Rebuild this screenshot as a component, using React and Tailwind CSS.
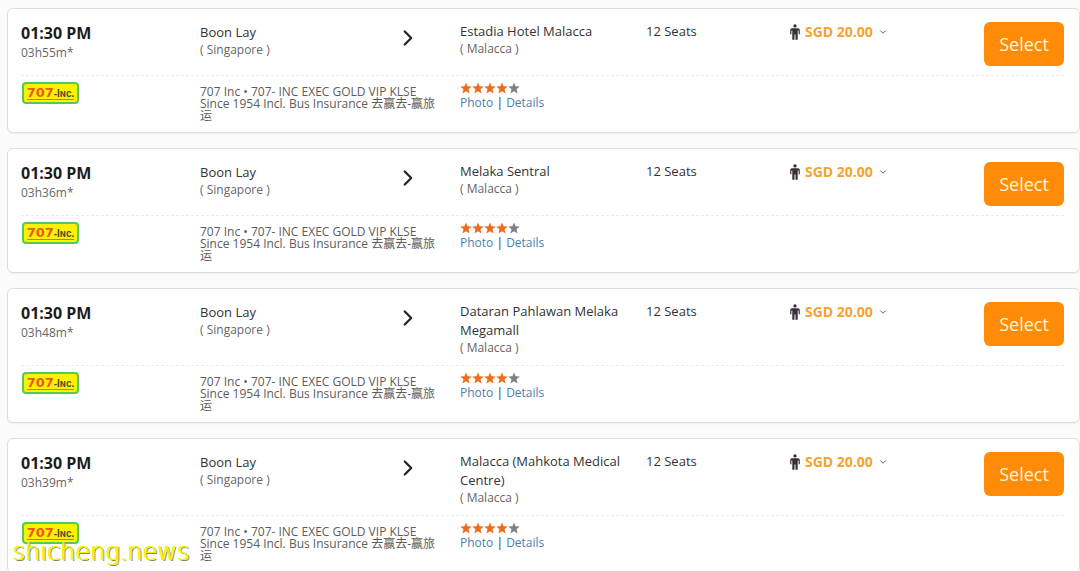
import React from 'react';
import { ChevronDown, ChevronRight } from 'lucide-react';

const trips = [
  { id: 1, time: "01:30 PM", duration: "03h55m*", to: "Estadia Hotel Malacca" },
  { id: 2, time: "01:30 PM", duration: "03h36m*", to: "Melaka Sentral" },
  { id: 3, time: "01:30 PM", duration: "03h48m*", to: "Dataran Pahlawan Melaka Megamall" },
  { id: 4, time: "01:30 PM", duration: "03h39m*", to: "Malacca (Mahkota Medical Centre)" }
];

const Person = () => (
  <svg viewBox="0 0 10 16" className="w-[10px] h-4 shrink-0" fill="#3a2d3a" aria-hidden="true">
    <circle cx="5" cy="1.9" r="1.7" />
    <path d="M2 4.2h6Q9.8 4.2 9.8 6v4.3H8.6V6.6H7.7V15.8H5.5V10.6H4.5V15.8H2.3V6.6H1.4v3.7H.2V6Q.2 4.2 2 4.2z" />
  </svg>
);

const OperatorLogo = () => (
  <div className="ml-px w-[57px] h-[22px] rounded border-2 border-[#52c95a] bg-[#fbf200] flex items-center justify-center">
    <div className="flex items-baseline border-b border-[#e0701c] h-[14px] leading-[13px] font-['DejaVu_Sans'] font-bold">
      <span className="text-[13px] text-[#ea5a0c]">707</span>
      <span className="text-[10px] font-['Liberation_Sans'] text-[#4f4a20]">-Iɴc.</span>
    </div>
  </div>
);

const Stars = ({ rating }) => (
  <div className="flex h-3" role="img" aria-label={`${rating} of 5`}>
    {[1, 2, 3, 4, 5].map(n => (
      <svg key={n} viewBox="0 0 24 24" className={`w-3 h-3 ${n <= rating ? 'fill-[#ec6d1c]' : 'fill-[#808080]'}`}>
        <path d="M12 .8l3.1 7.9 8.5.5-6.6 5.4 2.2 8.3-7.2-4.6-7.2 4.6L7 14.6.4 9.2l8.5-.5z" />
      </svg>
    ))}
  </div>
);

const TripCard = ({ trip }) => (
  <article className="rounded-md border border-[#dddde0] bg-white pl-[13px] pr-[15px] pt-[13px] pb-[10px] shadow-xs">
    <div className="grid grid-cols-[179fr_203fr_57fr_186fr_144fr_194fr_80px] items-start pb-[9px] border-b border-dashed border-[#ececec]">
      <div>
        <h2 className="text-[16px] leading-[22px] font-bold text-[#1c1c1c]">{trip.time}</h2>
        <p className="text-[12px] leading-[18px] text-[#666]">{trip.duration}</p>
      </div>
      <div>
        <p className="text-[13px] leading-5">Boon Lay</p>
        <p className="text-[12px] leading-4 text-[#666]">( Singapore )</p>
      </div>
      <ChevronRight size={26} strokeWidth={2} className="-ml-2 mt-[3px] text-[#222]" />
      <div className="pr-6">
        <p className="text-[13px] leading-[19px]">{trip.to}</p>
        <p className="text-[12px] leading-4 text-[#666]">( Malacca )</p>
      </div>
      <p className="text-[13px] leading-[19px]">12 Seats</p>
      <button className="flex items-center gap-[5px] justify-self-start text-[14px] leading-[19px] font-bold text-[#f5a32c]">
        <Person />
        SGD 20.00
        <ChevronDown size={10} strokeWidth={2} className="text-[#444]" />
      </button>
      <button className="h-11 rounded-md bg-[#ff8b07] text-[18px] text-[#fff6d8]">Select</button>
    </div>

    <div className="grid grid-cols-[179fr_260fr_604fr] items-start">
      <div className="pt-[6px]">
        <OperatorLogo />
      </div>
      <p className="mt-[10px] pr-5 text-[12px] leading-3 text-[#5c5c5c]">
        707 Inc • 707- INC EXEC GOLD VIP KLSE Since 1954 Incl. Bus Insurance 去赢去-赢旅运
      </p>
      <div className="pt-[6px]">
        <Stars rating={4} />
        <p className="text-[12px] leading-[18px]">
          <a href="#photo" className="text-[#4a7fb0]">Photo</a> | <a href="#details" className="text-[#4a7fb0]">Details</a>
        </p>
      </div>
    </div>
  </article>
);

const App = () => {
  return (
    <div className="relative h-screen overflow-hidden bg-[#fbfbfc] pt-2 pl-[7px] font-['Open_Sans','Noto_Sans_CJK_SC',sans-serif] text-[#333]">
      <main className="flex flex-col gap-[15px]">
        {trips.map(trip => (
          <TripCard key={trip.id} trip={trip} />
        ))}
      </main>

      {/* Site watermark */}
      <p className="absolute left-3 bottom-1 text-[24px] leading-[30px] font-extralight font-['DejaVu_Sans',sans-serif] text-[#f4f000] [text-shadow:1px_0_0_#f4f000,2px_1px_0_#8a8a3a]">
        shicheng.news
      </p>
    </div>
  );
};

export default App;
